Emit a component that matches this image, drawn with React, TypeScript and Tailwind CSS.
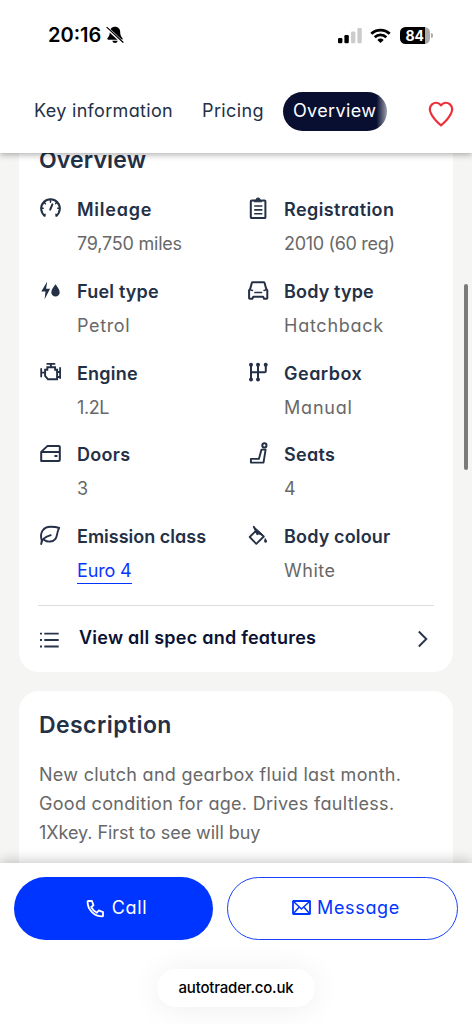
import type { ReactNode } from "react";

const stroke = {
  fill: "none",
  stroke: "currentColor",
  strokeWidth: 1.8,
  strokeLinecap: "round" as const,
  strokeLinejoin: "round" as const,
};

function Icon({ children }: { children: ReactNode }) {
  return (
    <svg viewBox="0 0 24 24" className="h-6 w-6 shrink-0" {...stroke}>
      {children}
    </svg>
  );
}

const icons = {
  mileage: (
    <Icon>
      <path d="M6.7 18.8A9.3 9.3 0 1 1 18.3 18.8" strokeWidth="2.1" />
      <path d="M12.5 2.6v2.6M6.2 5.4l1.2 1.3M18.8 5.4l-1.1 1.2M3.4 11.3h1.8M21.6 11.3h-1.8M5.8 18.4l1.3-1.2M19.2 18.4l-1.3-1.2" strokeWidth="1.5" />
      <path d="M12.2 12.6L14.4 7.3" strokeWidth="2" />
    </Icon>
  ),
  registration: (
    <Icon>
      <path d="M8 3.500H5.600a.8.8 0 0 0-.8.8v16a.8.8 0 0 0 .8.8h13a.8.8 0 0 0 .8-.8v-16a.8.8 0 0 0-.8-.8H16.500" strokeWidth="2" />
      <path d="M8.500 3H10a2.100 2.100 0 0 1 4.200 0h1.500v1.800H8.500z" fill="currentColor" strokeWidth="1" />
      <path d="M8.800 9h7M8.800 12.900h7M8.800 16.800h7" strokeWidth="1.600" />
    </Icon>
  ),
  fuel: (
    <Icon>
      <path d="M9.200 2.500L3.300 12.600h4.200L6.600 20.300L12.100 9.700H8.100z" fill="currentColor" stroke="none" />
      <path d="M17.500 5.300c1.800 2.700 4.200 5.200 4.200 8.100a4.200 4.200 0 0 1-8.400 0c0-2.900 2.400-5.400 4.200-8.100z" fill="currentColor" stroke="none" />
    </Icon>
  ),
  car: (
    <Icon>
      <path d="M4.300 9.600L5.800 4a1 1 0 0 1 1-.7h10.800a1 1 0 0 1 1 .7l1.500 5.600l1.200 1.700v7.800a.7.7 0 0 1-.7.7h-2.500l-1-2H7.300l-1 2H3.800a.7.7 0 0 1-.7-.7v-7.800z" strokeWidth="2" />
      <path d="M9 13.500h6.500" strokeWidth="1.700" />
      <path d="M4.500 10.800l2 .7M20 10.800l-2 .7" strokeWidth="1.400" />
    </Icon>
  ),
  engine: (
    <Icon>
      <path d="M9.300 2.900h7.200M12.900 3v3" strokeWidth="1.900" />
      <path d="M9.300 6.300h7.800v2.500h2v9.500H10l-2.900-3.500V8.800h2.200z" strokeWidth="1.900" strokeLinejoin="miter" />
      <path d="M3.200 8v7.500M3.200 11.700h3.600M22.100 6.800v10.300M19.400 11h2.700M19.400 16h2.700" strokeWidth="1.800" />
    </Icon>
  ),
  doors: (
    <Icon>
      <path d="M3.200 19V9.900L9.300 4.100h11.500a1 1 0 0 1 1 1V18a1 1 0 0 1-1 1zM3.400 10.100h18.200" strokeWidth="2" />
      <path d="M17.200 13.900h1.500" strokeWidth="2" />
    </Icon>
  ),
  gearbox: (
    <Icon>
      <path d="M5 4v14.500M12 4v14.500M19.800 4v6a1.200 1.200 0 0 1-1.200 1.200H5" strokeWidth="2" />
      <g fill="currentColor" stroke="none">
        <circle cx="5" cy="3.800" r="2" />
        <circle cx="12" cy="3.800" r="2" />
        <circle cx="19.700" cy="3.800" r="2" />
        <circle cx="5" cy="18.600" r="2" />
        <circle cx="12" cy="18.600" r="2" />
      </g>
    </Icon>
  ),
  seats: (
    <Icon>
      <circle cx="18.400" cy="3.400" r="2.100" strokeWidth="2" />
      <path d="M15.500 7.600h4.100l-2.100 13H4.900v-3.700h8z" strokeWidth="1.900" />
    </Icon>
  ),
  leaf: (
    <Icon>
      <path d="M3.200 20.100c0-3.400 3.300-7.100 9.500-8.900M3.600 15.900C1.500 8.400 5.600 2.700 12.500 2.700c3.800 0 6 .2 8.700 1.300c-2.500 3.600-1.400 7.800-3.700 10.800c-2.700 3.400-8.100 3.600-11.200 1.100" strokeWidth="1.900" />
    </Icon>
  ),
  paint: (
    <Icon>
      <path d="M9.900 6.800L3.700 13l6.600 6.800l7.500-7.300l-7.500-6.300zM7.800 2.800l3.500 7.400" strokeWidth="1.800" />
      <path d="M8.200 3l8.700 8l-5-1.200z" fill="currentColor" strokeWidth="1" />
      <path d="M19 13.800l2 2.900a1.500 1.500 0 1 1-2.900.1z" fill="currentColor" stroke="none" />
    </Icon>
  ),
};

type Spec = { icon: ReactNode; label: string; value: string; link?: boolean; labelClass: string; valueClass: string };

const specs: Spec[] = [
  { icon: icons.mileage, label: "Mileage", value: "79,750 miles", labelClass: "tracking-[0.75px]", valueClass: "tracking-[-0.22px]" },
  { icon: icons.registration, label: "Registration", value: "2010 (60 reg)", labelClass: "tracking-[0.42px]", valueClass: "tracking-[-0.32px]" },
  { icon: icons.fuel, label: "Fuel type", value: "Petrol", labelClass: "tracking-[0.2px]", valueClass: "tracking-[0.65px]" },
  { icon: icons.car, label: "Body type", value: "Hatchback", labelClass: "tracking-[0.15px]", valueClass: "tracking-[0.75px]" },
  { icon: icons.engine, label: "Engine", value: "1.2L", labelClass: "tracking-[0.2px]", valueClass: "tracking-[-0.4px]" },
  { icon: icons.gearbox, label: "Gearbox", value: "Manual", labelClass: "tracking-[0.5px]", valueClass: "tracking-[0.8px]" },
  { icon: icons.doors, label: "Doors", value: "3", labelClass: "tracking-[0.3px]", valueClass: "" },
  { icon: icons.seats, label: "Seats", value: "4", labelClass: "tracking-[0.3px]", valueClass: "" },
  { icon: icons.leaf, label: "Emission class", value: "Euro 4", link: true, labelClass: "tracking-[0px]", valueClass: "tracking-[-0.15px]" },
  { icon: icons.paint, label: "Body colour", value: "White", labelClass: "tracking-[0.15px]", valueClass: "tracking-[0.5px]" },
];

function SpecItem({ icon, label, value, link, labelClass, valueClass }: Spec) {
  return (
    <div className="flex h-[81.75px] gap-[15px] even:gap-[14px]">
      {icon}
      <div className="pt-px">
        <div className={"h-6 text-[18px] leading-6 font-semibold " + labelClass}>{label}</div>
        <div className="mt-2.5 flex">
          <span
            className={
              (link ? "border-b border-[#0034ff] text-[#0a35ff] " : "text-[#686868] ") +
              "text-[18px] leading-6 " + valueClass
            }
          >
            {value}
          </span>
        </div>
      </div>
    </div>
  );
}

function StatusBar() {
  return (
    <div className="flex h-[70px] items-center justify-between pr-[39px] pl-[48px] text-black">
      <div className="flex items-center gap-1">
        <span className="w-[54px] text-[20px] leading-6 font-semibold tracking-[0px] whitespace-nowrap">20:16</span>
        <svg viewBox="0 0 18 18" className="h-[18px] w-[18px]">
          <path d="M9 .8c-3 0-5.200 2.100-5.200 5.200C3.800 10.200 2 11 1.400 12.500c-.3.800.1 1.200.8 1.200h13.600c.7 0 1.100-.4.800-1.200C16 11 14.200 10.200 14.200 6C14.200 2.900 12 .8 9 .8zM6.300 14.800c.4 1.500 1.300 2.200 2.700 2.200s2.300-.7 2.700-2.200z" fill="#000" />
          <path d="M1.400 2.400L16.800 16.600" stroke="#fff" strokeWidth="3" />
          <path d="M1 1.400L17 16.300" stroke="#000" strokeWidth="1.200" strokeLinecap="round" />
        </svg>
      </div>
      <div className="mt-px flex items-center">
        <svg viewBox="0 0 24 16" className="h-4 w-6">
          <rect x="0" y="10" width="4.400" height="5.300" rx="1.200" />
          <rect x="6.400" y="7" width="4.400" height="8.300" rx="1.200" />
          <rect x="13" y="3.500" width="4.400" height="11.800" rx="1.200" fill="#ccc" />
          <rect x="19.400" y="0" width="4.400" height="15.300" rx="1.200" fill="#ccc" />
        </svg>
        <svg viewBox="0 0 21 16" className="ml-[8px] h-4 w-[21px]" fill="none" stroke="#000" strokeWidth="2.700">
          <path d="M1.300 5.800a13.200 13.200 0 0 1 18.400 0" />
          <path d="M4.700 9.200a8.300 8.300 0 0 1 11.600 0" />
          <path d="M10.500 15l-3.200-3.100a4.600 4.600 0 0 1 6.400 0z" fill="#000" stroke="none" />
        </svg>
        <div className="ml-[9px] flex items-center gap-px">
          <div className="flex h-[17px] w-[30px] items-center overflow-hidden rounded-[5.500px] bg-[linear-gradient(90deg,#000_84%,#aaa_84%)] pl-[5.500px] text-[14px] leading-[17px] font-bold text-white">84</div>
          <div className="h-[5px] w-[2px] rounded-r bg-[#aaa]" />
        </div>
      </div>
    </div>
  );
}

export default function App() {
  return (
    <div className="relative flex h-[1024px] w-[472px] flex-col overflow-hidden bg-[#f5f5f4] font-['Inter','Liberation_Sans',sans-serif] text-[#243046] [font-feature-settings:'cv11']">
      <header className="z-10 h-[153px] shrink-0 bg-white shadow-[0_2px_6px_rgba(0,0,0,0.3)]">
        <StatusBar />
        <nav className="flex h-[83px] pl-[34px] text-[18px] leading-6">
          <a className="mt-[29px] w-[168px] tracking-[0.32px] whitespace-nowrap">Key information</a>
          <a className="mt-[29px] w-[81px] tracking-[0.4px]">Pricing</a>
          <div className="mt-[22px] flex h-[39px] w-[104px] overflow-hidden rounded-full bg-[linear-gradient(90deg,#080f31_90%,#9ea0ae_100%)] pt-[7px] pl-[10px] tracking-[0.35px] text-white">Overview</div>
          <svg viewBox="0 0 26 26" className="mt-[31px] ml-[41px] h-[26px] w-[26px]" fill="none" stroke="#ec3039" strokeWidth="2.200" strokeLinejoin="round">
            <path d="M13 4.400C10.800 1.100 6.700 1 4 3.400C1.300 5.900 1.500 9.600 3.100 12.700C5.200 17 9.600 21.500 13 24.300C16.400 21.500 20.800 17 22.900 12.700C24.500 9.600 24.700 5.900 22 3.400C19.300 1 15.200 1.100 13 4.400z" />
          </svg>
        </nav>
      </header>

      <main className="flex min-h-0 flex-1 flex-col gap-[19px] overflow-hidden px-[19px]">
        <section className="h-[519px] shrink-0 rounded-b-[20px] bg-white">
          <h2 className="-mt-[9px] h-[53px] pl-5 text-[23px] leading-8 font-semibold tracking-[0.15px]">Overview</h2>
          <div className="grid h-[408px] grid-cols-[208px_1fr] content-start pl-[19px]">
            {specs.map((s) => (
              <SpecItem key={s.label} {...s} />
            ))}
          </div>
          <div className="mx-[19px] flex h-[66px] items-center border-t border-[#dcdcdc]">
            <svg viewBox="0 0 22 22" className="mt-[3px] h-[22px] w-[22px]" fill="none" stroke="#27344a" strokeWidth="1.900">
              <path d="M6.300 4.600H20.700M6.300 11H20.700M6.300 17.500H20.700M2 4.600h2M2 11h2M2 17.500h2" />
            </svg>
            <span className="mb-[2px] ml-[19px] flex-1 text-[18px] leading-6 font-semibold tracking-[0.24px] text-[#0b1233]">View all spec and features</span>
            <svg viewBox="0 0 12 18" className="mt-px mr-[5px] h-[18px] w-3" fill="none" stroke="#27344a" strokeWidth="1.900">
              <path d="M1.800 1.500L9.300 9L1.800 16.500" />
            </svg>
          </div>
        </section>

        <section className="h-[220px] shrink-0 rounded-t-[20px] bg-white px-5 pt-[18px]">
          <h2 className="text-[23px] leading-8 font-semibold tracking-[0.42px]">Description</h2>
          <p className="mt-[19px] text-[18px] leading-[29px] whitespace-nowrap text-[#686868]">
            <span className="block tracking-[0.28px]">New clutch and gearbox fluid last month.</span>
            <span className="block tracking-[0.3px]">Good condition for age. Drives faultless.</span>
            <span className="block tracking-[-0.05px]">1Xkey. First to see will buy</span>
          </p>
        </section>
      </main>

      <footer className="z-10 flex h-[161px] shrink-0 flex-col items-center bg-white pt-[14px] shadow-[0_-2px_12px_rgba(0,0,0,0.22)]">
        <div className="flex w-full gap-[14px] pr-[14px] pl-[14px] text-[18px] leading-6">
          <button className="flex h-[63px] w-[199px] items-center justify-center gap-[7px] rounded-full bg-[#0034ff] pb-[2px] pl-[6px] tracking-[0.7px] text-white">
            <svg viewBox="0 0 24 24" className="mt-[2px] h-[19px] w-[19px]" {...stroke} strokeWidth="2.300">
              <path d="M3 2.500h4.500l2 5.500-2.800 2.200c1.500 3.200 3.900 5.600 7.100 7.100l2.200-2.800 5.500 2V21c0 .6-.5 1-1 1C10.500 22 2 13.500 2 3.500c0-.5.500-1 1-1z" />
            </svg>
            Call
          </button>
          <button className="flex h-[63px] w-[231px] items-center justify-center gap-[6px] rounded-full border-[1.500px] border-[#1740ff] pb-[2px] pl-[7px] tracking-[0.65px] text-[#0034ff]">
            <svg viewBox="0 0 19 15" className="h-[15px] w-[19px]" {...stroke}>
              <rect x="1" y="1" width="17" height="13" rx=".5" />
              <path d="M1.500 1.500l8 7.500 8-7.500M1.500 13.500l5.500-6.200M17.500 13.500L12 7.300" strokeWidth="1.500" />
            </svg>
            Message
          </button>
        </div>
        <div className="mt-[29px] flex h-[38px] w-[158px] items-center justify-center rounded-full bg-white text-[15px] font-medium tracking-[-0.2px] text-black shadow-[0_2px_32px_rgba(0,0,0,0.07)] [font-feature-settings:normal]">autotrader.co.uk</div>
      </footer>

      <div className="absolute top-[284px] left-[464px] z-20 h-[186px] w-[4px] rounded-full bg-[#7b7b7b]" />
    </div>
  );
}
